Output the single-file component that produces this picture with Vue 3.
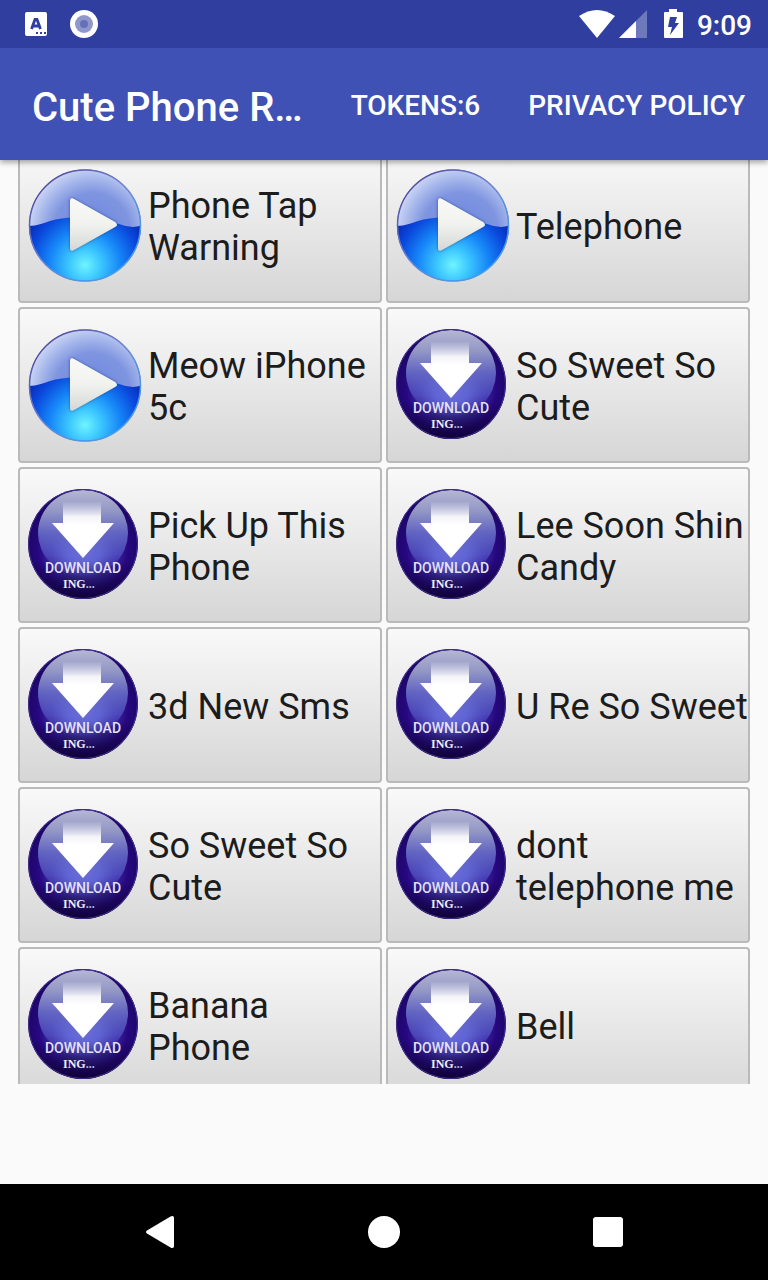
<script setup>
import { ref } from 'vue'

const tokens = ref(6)
const ringtones = ref([
  { name: 'Phone Tap Warning', ready: true },
  { name: 'Telephone', ready: true },
  { name: 'Meow iPhone 5c', ready: true },
  { name: 'So Sweet So Cute', ready: false },
  { name: 'Pick Up This Phone', ready: false },
  { name: 'Lee Soon Shin Candy', ready: false },
  { name: '3d New Sms', ready: false },
  { name: 'U Re So Sweet', ready: false },
  { name: 'So Sweet So Cute', ready: false },
  { name: 'dont telephone me', ready: false },
  { name: 'Banana\nPhone', ready: false },
  { name: 'Bell', ready: false },
])
</script>

<template>
  <div class="screen">
    <svg class="defs" width="0" height="0" aria-hidden="true">
      <defs>
        <radialGradient id="play-base" gradientUnits="userSpaceOnUse" cx="57" cy="98" r="64">
          <stop offset="0" stop-color="#6ff4ff" />
          <stop offset="0.25" stop-color="#3cc6ff" />
          <stop offset="0.55" stop-color="#1686f8" />
          <stop offset="0.85" stop-color="#0a48dc" />
          <stop offset="1" stop-color="#0733c0" />
        </radialGradient>
        <radialGradient id="play-gloss" gradientUnits="userSpaceOnUse" cx="64" cy="64" r="64">
          <stop offset="0" stop-color="#6a86e0" />
          <stop offset="0.6" stop-color="#7f95e0" />
          <stop offset="0.8" stop-color="#a3b4ea" />
          <stop offset="1" stop-color="#c9d4f4" />
        </radialGradient>
        <linearGradient id="play-rim" x1="0" y1="0" x2="1" y2="1">
          <stop offset="0" stop-color="#4c3a8c" />
          <stop offset="0.45" stop-color="#6f83cc" />
          <stop offset="1" stop-color="#3aa5f0" />
        </linearGradient>
        <linearGradient id="play-arrow" x1="0" y1="0" x2="0" y2="1">
          <stop offset="0" stop-color="#fafaf8" />
          <stop offset="0.5" stop-color="#f1f2ee" />
          <stop offset="1" stop-color="#d4d8d6" />
        </linearGradient>
        <filter id="arrow-shade" x="-20%" y="-20%" width="140%" height="140%">
          <feDropShadow dx="0" dy="0" stdDeviation="1.5" flood-color="#26407c" flood-opacity="0.8" />
        </filter>
        <radialGradient id="dl-base" gradientUnits="userSpaceOnUse" cx="55" cy="62" r="56">
          <stop offset="0" stop-color="#8088ea" />
          <stop offset="0.3" stop-color="#646ad8" />
          <stop offset="0.55" stop-color="#3c2ea4" />
          <stop offset="0.8" stop-color="#260880" />
          <stop offset="1" stop-color="#1e0668" />
        </radialGradient>
        <linearGradient id="dl-gloss" x1="0" y1="0" x2="0" y2="1">
          <stop offset="0" stop-color="#b4b6d4" />
          <stop offset="0.25" stop-color="#9296c4" />
          <stop offset="0.5" stop-color="#6468c4" stop-opacity="0.95" />
          <stop offset="0.75" stop-color="#5c60d0" stop-opacity="0.6" />
          <stop offset="1" stop-color="#4d48c2" stop-opacity="0" />
        </linearGradient>
        <linearGradient id="dl-floor" x1="0" y1="0" x2="0" y2="1">
          <stop offset="0.65" stop-color="#12023e" stop-opacity="0" />
          <stop offset="1" stop-color="#0d0130" stop-opacity="0.9" />
        </linearGradient>
        <linearGradient id="dl-arrow" x1="0" y1="0" x2="0" y2="1">
          <stop offset="0" stop-color="#ffffff" stop-opacity="0.05" />
          <stop offset="0.26" stop-color="#ffffff" stop-opacity="0.9" />
          <stop offset="0.4" stop-color="#ffffff" />
        </linearGradient>
      </defs>
    </svg>

    <div class="status-bar">
      <div class="notices">
        <svg width="24" height="26" viewBox="0 0 24 26" aria-hidden="true">
          <rect x="1" y="1" width="22" height="24" rx="2" fill="#fff" />
          <path d="M7.500 18 11 8.500h2L16.500 18M9 15h6" fill="none" stroke="#303f9f" stroke-width="2.800" />
          <path d="M12 21h2v2h-2zM16 21h2v2h-2zM20 21h2v2h-2z" fill="#303f9f" />
        </svg>
        <svg width="28" height="28" viewBox="0 0 28 28" aria-hidden="true">
          <circle cx="14" cy="14" r="14" fill="#fff" />
          <circle cx="14" cy="14" r="9" fill="#8f97cb" />
          <circle cx="14" cy="14" r="4" fill="#6570b8" />
        </svg>
      </div>
      <div class="signals">
        <svg width="36" height="28" viewBox="0 0 36 28" aria-hidden="true">
          <path d="M0 6Q18-6 36 6L18 28Z" fill="#fff" />
        </svg>
        <svg class="cell-signal" width="28" height="28" viewBox="0 0 28 28" aria-hidden="true">
          <path d="M28 0v28H0z" fill="#fff" opacity="0.3" />
          <path d="M17 11v17H0z" fill="#fff" />
        </svg>
        <svg class="battery" width="20" height="30" viewBox="0 0 20 30" aria-hidden="true">
          <path d="M6 0h8v3h5q1 0 1 1v24q0 1-1 1H2q-1 0-1-1V4q0-1 1-1h4z" fill="#fff" />
          <path d="M7 8h7l-2 6h4L7 26l2-8H5z" fill="#303f9f" />
        </svg>
        <span class="clock">9:09</span>
      </div>
    </div>

    <header class="app-bar">
      <h1>Cute Phone R…</h1>
      <button type="button" class="action">TOKENS:{{ tokens }}</button>
      <button type="button" class="action">PRIVACY POLICY</button>
    </header>

    <main class="list">
      <div class="grid">
        <button v-for="(tone, i) in ringtones" :key="i" type="button" class="tone">
          <svg v-if="tone.ready" class="icon" width="116" height="116" viewBox="0 0 116 116" aria-hidden="true">
            <circle cx="57" cy="58.500" r="56" fill="url(#play-base)" />
            <path d="M1 58.500A56 56 0 0 1 113 58.500Q104 62 91 57L68 52Q40 48 22 54Q6 60 1 58.500Z" fill="url(#play-gloss)" />
            <circle cx="57" cy="58.500" r="55.500" fill="none" stroke="url(#play-rim)" stroke-width="1.500" />
            <path d="M42 34Q42 30 46 32L87 55Q91 58 87 60L46 83Q42 85 42 81Z" fill="url(#play-arrow)" filter="url(#arrow-shade)" />
          </svg>
          <svg v-else class="icon" width="116" height="116" viewBox="0 0 116 116" aria-hidden="true">
            <circle cx="55" cy="57" r="55" fill="url(#dl-base)" />
            <circle cx="55" cy="57" r="55" fill="url(#dl-floor)" />
            <ellipse cx="55" cy="46" rx="45" ry="43" fill="url(#dl-gloss)" />
            <circle cx="55" cy="57" r="54.500" fill="none" stroke="#43318e" stroke-width="1" />
            <path d="M35 15H73V36H86L55 71L24 36H35Z" fill="url(#dl-arrow)" />
            <text x="55" y="86" class="icon-word">DOWNLOAD</text>
            <text x="35" y="101" class="icon-tail">ING<tspan class="icon-dots">...</tspan></text>
          </svg>
          <span class="name">{{ tone.name }}</span>
        </button>
      </div>
    </main>

    <div class="banner-space"></div>

    <nav class="nav-bar">
      <button type="button" aria-label="Back">
        <svg width="32" height="34" viewBox="0 0 32 34" aria-hidden="true">
          <path d="M3 15.500 26.500 1.500Q30 0 30 3V31Q30 34 26.500 32.500L3 18.500Q1 17 3 15.500Z" fill="#fff" />
        </svg>
      </button>
      <button type="button" aria-label="Home">
        <svg width="32" height="32" viewBox="0 0 32 32" aria-hidden="true">
          <circle cx="16" cy="16" r="16" fill="#fff" />
        </svg>
      </button>
      <button type="button" aria-label="Recent apps">
        <svg width="32" height="32" viewBox="0 0 32 32" aria-hidden="true">
          <rect x="1" y="1" width="30" height="30" rx="3" fill="#fff" />
        </svg>
      </button>
    </nav>
  </div>
</template>

<style>
body {
  margin: 0;
  background: #fafafa;
}
</style>

<style scoped>
.screen {
  display: flex;
  flex-direction: column;
  height: 100vh;
  background: #fafafa;
  font-family: Roboto, "Liberation Sans", sans-serif;
}
.screen * {
  box-sizing: border-box;
}
button {
  margin: 0;
  padding: 0;
  border: 0;
  background: none;
  color: inherit;
  font: inherit;
  cursor: pointer;
}
svg {
  display: block;
  flex: none;
}
.defs {
  position: absolute;
}
.status-bar {
  position: relative;
  z-index: 2;
  display: flex;
  flex: none;
  align-items: center;
  justify-content: space-between;
  height: 48px;
  padding: 0 16px 0 24px;
  background: #303f9f;
  color: #fff;
}
.notices,
.signals {
  display: flex;
  align-items: center;
}
.notices {
  gap: 22px;
}
.cell-signal {
  margin-left: 4px;
}
.battery {
  margin: 0 14px 0 16px;
}
.clock {
  padding-top: 4px;
  font-size: 28px;
  font-weight: 500;
  line-height: 32px;
}
.app-bar {
  position: relative;
  z-index: 1;
  display: flex;
  flex: none;
  align-items: center;
  gap: 48px;
  height: 112px;
  padding: 4px 24px 0 32px;
  background: #3f51b5;
  box-shadow: 0 2px 6px rgba(0, 0, 0, 0.4);
  color: #fff;
}
h1 {
  flex: 1;
  margin: 0;
  padding-top: 4px;
  font-size: 40px;
  font-weight: 500;
  line-height: 48px;
  white-space: nowrap;
}
.action {
  font-size: 28px;
  font-weight: 500;
  line-height: 32px;
  white-space: nowrap;
}
.list {
  flex: 1;
  min-height: 0;
  overflow: hidden;
  padding: 0 18px;
}
.grid {
  display: grid;
  grid-template-columns: 1fr 1fr;
  grid-auto-rows: 156px;
  gap: 4px;
  margin-top: -13px;
}
.tone {
  display: flex;
  align-items: center;
  gap: 4px;
  min-width: 0;
  padding-left: 8px;
  border: 2px solid #bababa;
  border-radius: 4px;
  background: linear-gradient(#f9f9f9, #d6d6d6);
  color: #1c1c1c;
  text-align: left;
}
.name {
  padding-top: 4px;
  font-size: 36px;
  line-height: 42px;
  white-space: pre-line;
}
.icon-word {
  fill: #e4e2f4;
  font-family: Roboto, sans-serif;
  font-size: 14px;
  font-weight: 500;
  text-anchor: middle;
}
.icon-tail {
  fill: #f0eef8;
  font-family: "Liberation Serif", serif;
  font-size: 12px;
  font-weight: 700;
}
.icon-dots {
  fill: #b4acd8;
}
.banner-space {
  flex: none;
  height: 100px;
}
.nav-bar {
  display: flex;
  flex: none;
  align-items: center;
  justify-content: center;
  gap: 192px;
  height: 96px;
  background: #000;
}
</style>
